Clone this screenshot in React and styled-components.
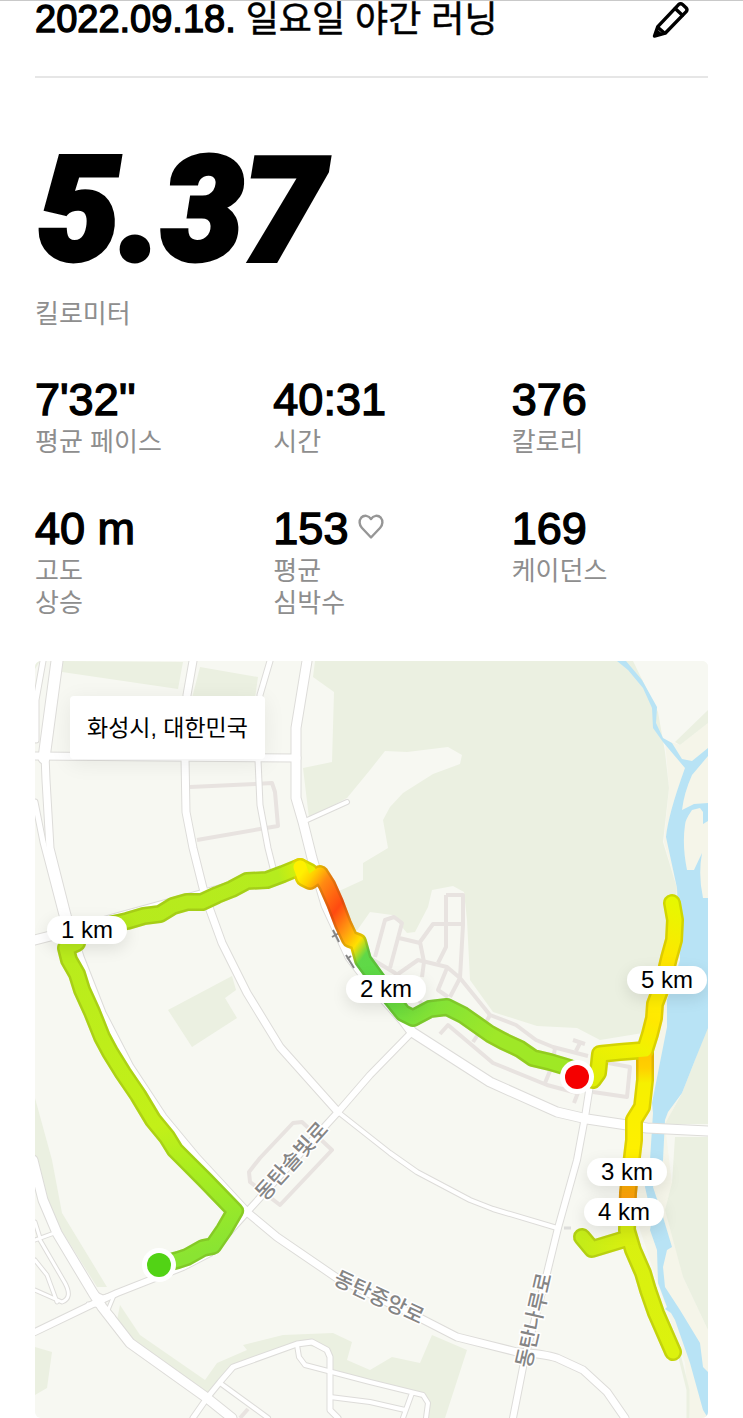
import React from "react";
import styled, { createGlobalStyle } from "styled-components";

const GlobalStyle = createGlobalStyle`
  * {
    box-sizing: border-box;
  }

  body {
    margin: 0;
    background: #fff;
    color: #000;
    font-family: "Liberation Sans", "Noto Sans CJK KR", sans-serif;
  }
`;

const Page = styled.main`
  padding: 0 35px;
  border-top: 1px solid #c9c9c9;
`;

const Header = styled.header`
  display: flex;
  align-items: flex-start;
  justify-content: space-between;
  height: 77px;
  border-bottom: 2px solid #e6e6e6;
`;

const Title = styled.h1`
  margin: 0;
  font-size: 36px;
  font-weight: 400;
  line-height: 36px;
  -webkit-text-stroke: 0.5px #000;
`;

const RunDate = styled.time`
  font-size: 38px;
  -webkit-text-stroke: 1.4px #000;
`;

const EditButton = styled.button`
  display: flex;
  margin: 0;
  margin-right: 16px;
  padding: 0;
  border: none;
  background: none;
  cursor: pointer;
`;

const Distance = styled.section`
  padding-top: 62px;
`;

const DistanceValue = styled.div`
  padding-left: 3px;
  font-family: Roboto, "Liberation Sans", sans-serif;
  font-size: 145px;
  font-style: italic;
  font-weight: 900;
  line-height: 140px;
  -webkit-text-stroke: 5px #000;
`;

const Label = styled.div`
  color: #8e8e8e;
  font-size: 26px;
  line-height: 32px;
`;

const DistanceLabel = styled(Label)`
  margin-top: 18px;
`;

const Stats = styled.section`
  display: grid;
  grid-template-columns: repeat(3, 1fr);
  gap: 45px 42px;
  padding: 44px 0 42px;
`;

const StatValue = styled.div`
  display: flex;
  align-items: center;
  gap: 10px;
  font-size: 45px;
  font-kerning: none;
  line-height: 52px;
  -webkit-text-stroke: 1.4px #000;

  svg {
    margin-bottom: 4px;
  }
`;

const MapBox = styled.section`
  position: relative;
  overflow: hidden;
  border-radius: 6px;
  background: #f7f8f2;
`;

const MapSvg = styled.svg`
  display: block;
  width: 100%;
  height: auto;
`;

const Place = styled.div`
  position: absolute;
  top: 35px;
  left: 35px;
  padding: 16px 17px 15px;
  border-radius: 4px;
  background: #fff;
  box-shadow: 0 4px 22px rgba(0, 0, 0, 0.07);
  font-size: 23px;
  line-height: 32px;
`;

const KmPin = styled.div`
  position: absolute;
  left: ${(p) => ((p.$x - 35) / 673) * 100}%;
  top: ${(p) => ((p.$y - 661) / 757) * 100}%;
  width: 80px;
  border-radius: 14px;
  background: #fff;
  box-shadow: 0 5px 16px rgba(0, 0, 0, 0.1);
  font-size: 24px;
  line-height: 28px;
  text-align: center;
  transform: translate(-50%, -50%);
`;

const RoadName = styled.text`
  fill: #858585;
  stroke: #fff;
  stroke-width: 3px;
  paint-order: stroke;
  font-size: 21px;
  font-weight: 500;
  text-anchor: middle;
`;

const stats = [
  { value: "7'32''", label: ["평균 페이스"] },
  { value: "40:31", label: ["시간"] },
  { value: "376", label: ["칼로리"] },
  { value: "40 m", label: ["고도", "상승"] },
  { value: "153", label: ["평균", "심박수"], heart: true },
  { value: "169", label: ["케이던스"] },
];

const pins = [
  { text: "1 km", x: 87, y: 930 },
  { text: "2 km", x: 386, y: 989 },
  { text: "3 km", x: 627, y: 1172 },
  { text: "4 km", x: 624, y: 1212 },
  { text: "5 km", x: 667, y: 980 },
];

const parks = [
  "M63 661L183 662L178 689L62 672Z",
  "M200 667L258 677L255 698L192 698Z",
  "M35 661H40L35 669Z",
  "M315 661L313 677L334 692L332 762L303 768L309 818L347 798L370 770L385 751L407 752L448 747L462 755L460 764L433 774L403 793L390 807L383 820L388 848L363 863V880L337 892L356 932L370 912L392 915L407 933L415 932L428 907L432 890L453 886L464 892L467 920L470 980L493 1012L537 1026L577 1028L600 1040L643 1033L667 960L677 888L663 842L669 788L665 752L658 712L633 661Z",
  "M168 1010L232 976L236 990L225 998L237 1018L192 1047Z",
  "M35 1098L52 1160L62 1213L107 1287L97 1287L53 1217L35 1160Z",
  "M120 1305L140 1335L205 1380L217 1363L247 1350L243 1345L283 1335L333 1333L352 1342L347 1360L370 1370L392 1357L420 1363L432 1335L467 1350L445 1418H428V1398L330 1372L327 1350L297 1343L233 1367L207 1398L130 1343L117 1320Z",
  "M35 1347L52 1352L47 1388L35 1395Z",
];

const river =
  "M617 661H626L642 680L657 707L656 723L663 738L672 743L682 759L692 761L708 748V756L692 775Q684 793 682 810L694 804L708 803V821L703 824V812L700 808L692 810Q685 820 685 825Q682 845 687 870L694 870L702 853Q698 875 703 898H708V1028L695 1060L682 1093L668 1112L665 1120L663 1160L653 1187L663 1217L672 1247L667 1250L663 1267L665 1287L680 1310L700 1343L703 1367L708 1372V1418L703 1410L690 1363L675 1320L671 1313L665 1309L667 1307L658 1283L657 1250L650 1230L652 1218L645 1187L650 1160L653 1113L652 1103L667 1027L667 1000L680 960L677 888L666 837Q668 815 685 768L663 742L653 728L652 708L643 688L628 670Z";

const lanes = [
  "M190 787L255 784L272 783L275 792L278 826L260 829L197 840",
  "M260 1158L293 1123L302 1122L332 1150L280 1205L250 1182L249 1172Z",
  "M446 895H463V925L460 978L490 1015L516 1025L536 1040L553 1047L588 1056",
  "M446 895V947L438 963",
  "M463 924H433L420 942L424 962L422 977",
  "M375 957L385 920L394 917L402 923L390 968M399 938L420 943",
  "M398 974L418 960L447 967L460 978L450 997M447 968L438 990L448 997",
  "M370 958L395 973L423 1005M395 973L413 1000",
  "M440 1034L448 1025L493 1063L547 1085L577 1093M473 1042L479 1033",
  "M545 1083L552 1066L555 1048M490 1015L485 1024",
  "M579 1090L574 1103M573 1040L585 1044M580 1043L576 1051",
  "M593 1092L627 1097L630 1067L603 1062",
  "M240 1418L248 1409",
];

// width is the casing, the white fill is drawn 2px narrower
const roads = [
  { w: 7, d: "M43 661L36 700V740M35 802L43 842L55 888L62 915" },
  { w: 13, d: "M57 661L48 728L44 758" },
  { w: 9, d: "M45 755L46 780L50 848L67 915L80 957L102 1013L130 1067L163 1117L197 1158L247 1212L277 1237L337 1278L420 1318L457 1337L517 1352Q545 1354 557 1358L583 1370L607 1392L625 1418" },
  { w: 9, d: "M35 756L297 758" },
  { w: 9, d: "M193 661L187 695L185 758L186 812L193 848L203 888L210 910L222 943L247 993L280 1047L338 1112" },
  { w: 6, d: "M338 1112L390 1153L417 1172L470 1200L493 1209L557 1228" },
  { w: 7, d: "M270 661L260 695L258 760L260 805L268 848L273 868" },
  { w: 11, d: "M307 661L296 728V798L303 822L312 858L326 905L350 957L370 983L403 1020L412 1032L437 1048L490 1082L557 1112L587 1119L647 1128L708 1131" },
  { w: 6, d: "M305 821L347 802" },
  { w: 8, d: "M412 1032L370 1075L338 1112L247 1212L210 1253L183 1267L117 1293L93 1304L35 1332" },
  { w: 11, d: "M35 940L70 931L120 917L197 896L300 868" },
  { w: 11, d: "M33 1160L43 1200L57 1233L93 1293L102 1307L130 1343L207 1398L232 1418" },
  { w: 5, d: "M57 1232L35 1240M40 1240L65 1283Q73 1298 62 1302L35 1290M35 1222L40 1238M35 1260L47 1275L57 1302" },
  { w: 5, d: "M92 1292L103 1297L118 1293M88 1304L102 1306L113 1316M115 1293L108 1310" },
  { w: 7, d: "M193 1418L207 1398L220 1382L233 1367L297 1344L312 1342L327 1350L330 1357V1410L338 1418" },
  { w: 6, d: "M297 1345L299 1357L305 1365L370 1382L423 1395L428 1403L426 1418M330 1397L370 1402L405 1410M412 1393L403 1418M220 1383L268 1418" },
  { w: 8, d: "M590 1085L585 1117L577 1160L558 1228L547 1273L525 1357L513 1418" },
];

const routes = [
  {
    d: "M159 1265L178 1260L187 1257L203 1248L213 1246L224 1230L235 1211L205 1180L190 1165L175 1150L167 1137L153 1120L138 1095L123 1073L110 1052L102 1037L92 1012L82 990L77 974L69 960L66 948L77 943",
    id: "a",
  },
  {
    d: "M100 927L127 921L144 916L160 914L173 906L187 902L202 902L217 895L232 889L247 881L267 880L283 874L300 867L310 872",
    id: "b",
  },
  { d: "M300 867L304 878L310 881L320 874L327 885L335 903L343 924L350 939L358 942L363 960L387 993L403 1013L413 1018L430 1009L447 1007L463 1015L490 1034L503 1041L520 1049L533 1058L550 1062L570 1068", id: "c" },
  { d: "M645 1050L645 1080L642 1107L634 1120L634 1140L631 1165L628 1193L627 1230L633 1250L643 1273L648 1290L656 1313L673 1352", id: "e" },
  { d: "M593 1080L598 1073L600 1054L620 1052L645 1050L650 1034L654 1018L655 1004L663 983L669 958L674 940L675 920L672 903", id: "d" },
  { d: "M582 1237L592 1249L625 1239", id: "f" },
];

const gradients = [
  { id: "a", from: [159, 1265], to: [70, 960], stops: [[0, "#8ae432"], [0.25, "#a9ed20"], [0.42, "#c3f018"], [1, "#b9ec1c"]] },
  { id: "b", from: [100, 927], to: [310, 868], stops: [[0, "#b7ea1c"], [0.85, "#b5ec1e"], [1, "#e8f000"]] },
  { id: "c", from: [304, 870], to: [570, 1068], stops: [[0, "#fff000"], [0.03, "#ffd000"], [0.07, "#ff8a12"], [0.15, "#ff4a10"], [0.21, "#ff9a10"], [0.26, "#ffe000"], [0.3, "#60d848"], [0.4, "#5cdc44"], [0.56, "#82e236"], [0.76, "#9fe828"], [1, "#9fe824"]] },
  { id: "d", from: [595, 1080], to: [680, 903], stops: [[0, "#dfee08"], [0.25, "#f2f200"], [0.4, "#ffe800"], [0.55, "#fff000"], [0.7, "#ffe600"], [1, "#e6f800"]] },
  { id: "e", from: [645, 1050], to: [645, 1352], stops: [[0, "#ffc400"], [0.06, "#ffd000"], [0.11, "#f6f000"], [0.35, "#fff000"], [0.43, "#ffb400"], [0.5, "#ff9f10"], [0.57, "#d8f010"], [1, "#dcf20e"]] },
  { id: "f", from: [582, 1237], to: [625, 1239], stops: [[0, "#c4ec18"], [1, "#d8f010"]] },
];

const PencilIcon = () => (
  <svg width="40" height="40" viewBox="12 1 40 40" fill="none" stroke="#000" strokeWidth="3.4" strokeLinejoin="round" strokeLinecap="round" aria-hidden="true">
    <path d="M14.5 36L17.8 26.6L38.6 4.6Q40.6 2.8 42.6 4.6L46 7.7Q47.8 9.6 46.2 11.6L25.2 33.2Z" />
    <path d="M35.2 8.5L42.4 15.2M18 27.5L24.4 33" />
    <path d="M15 35.5L17 30.5L20.5 33.6Z" fill="#000" strokeWidth="2" />
  </svg>
);

const HeartIcon = () => (
  <svg width="26" height="26" viewBox="0 0 26 26" fill="none" stroke="#969696" strokeWidth="2.4" strokeLinejoin="round" aria-hidden="true">
    <path d="M13 23.5L3.8 13.7C1.2 10.9 0.8 6.4 3.2 3.7C6 0.8 10.6 1.3 13 5C15.4 1.3 20 0.8 22.8 3.7C25.2 6.4 24.8 10.9 22.2 13.7Z" />
  </svg>
);

const RouteMap = () => (
  <MapSvg viewBox="35 661 673 757" role="img" aria-label="러닝 경로">
    <defs>
      {gradients.map((g) => (
        <linearGradient key={g.id} id={`pace-${g.id}`} gradientUnits="userSpaceOnUse" x1={g.from[0]} y1={g.from[1]} x2={g.to[0]} y2={g.to[1]}>
          {g.stops.map(([offset, color]) => (
            <stop key={offset} offset={offset} stopColor={color} />
          ))}
        </linearGradient>
      ))}
    </defs>

    {/* river banks */}
    <path fill="#f5f5e9" d="M665 740L680 745L708 723V1040L665 1125L683 1277L708 1330V1418H690L685 1363L650 1260L630 1200L640 1050L677 888L664 842L669 788Z" />
    <path fill="#f7f8f2" d="M650 661H708V710L672 743L660 712Z" />
    <path fill="#ebf0e1" d="M708 710V723L680 745L675 742Z" />
    {parks.map((d) => (
      <path key={d} d={d} fill="#ebf0e1" />
    ))}
    <path fill="#ebf0e1" d="M708 1025L695 1060L682 1093L665 1124H708ZM675 1137H708V1330L683 1277L665 1210L672 1183Z" />
    <path fill="none" stroke="#ebf0e1" strokeWidth="3" d="M678 1350L688 1390V1418" />
    <path d={river} fill="#b8e3f5" />

    <g fill="none" stroke="#e8e3e0" strokeWidth="4" strokeLinejoin="round">
      {lanes.map((d) => (
        <path key={d} d={d} />
      ))}
    </g>
    <g fill="none" stroke="#dddcd9" strokeLinejoin="round" strokeLinecap="round">
      {roads.map((r) => (
        <path key={r.d} d={r.d} strokeWidth={r.w} />
      ))}
    </g>
    <g fill="none" stroke="#fff" strokeLinejoin="round" strokeLinecap="round">
      {roads.map((r) => (
        <path key={r.d} d={r.d} strokeWidth={r.w - 2} />
      ))}
    </g>
    <path d="M564 1228H571" stroke="#dddddb" strokeWidth="3" />
    <path d="M333 930L339 942M332 937L341 932M346 955L354 968M347 959L351 956" stroke="#858585" strokeWidth="2" />

    <RoadName transform="translate(297 1166) rotate(-48)">동탄솔빛로</RoadName>
    <RoadName transform="translate(376 1304) rotate(25)">동탄중앙로</RoadName>
    <RoadName transform="translate(541 1322) rotate(-77)">동탄나루로</RoadName>

    {routes.map((r) => (
      <g key={r.id} fill="none" stroke={`url(#pace-${r.id})`} strokeLinejoin="round" strokeLinecap="round">
        <path d={r.d} strokeWidth="18" />
        <path d={r.d} strokeWidth="18" stroke="#5a5000" strokeOpacity="0.18" />
      </g>
    ))}
    {routes.map((r) => (
      <path key={r.id} d={r.d} fill="none" stroke={`url(#pace-${r.id})`} strokeWidth="13" strokeLinejoin="round" strokeLinecap="round" />
    ))}

    <circle cx="159" cy="1265" r="17" fill="#fff" />
    <circle cx="159" cy="1265" r="12" fill="#52d315" />
    <circle cx="577" cy="1077" r="17" fill="#fff" />
    <circle cx="577" cy="1077" r="12" fill="#f50000" />
  </MapSvg>
);

const App = () => {
  return (
    <>
      <GlobalStyle />
      <Page>
        <Header>
          <Title>
            <RunDate dateTime="2022-09-18">2022.09.18.</RunDate> 일요일 야간 러닝
          </Title>
          <EditButton type="button" aria-label="수정">
            <PencilIcon />
          </EditButton>
        </Header>

        <Distance>
          <DistanceValue>5.37</DistanceValue>
          <DistanceLabel>킬로미터</DistanceLabel>
        </Distance>

        <Stats>
          {stats.map((s) => (
            <div key={s.value}>
              <StatValue>
                {s.value}
                {s.heart && <HeartIcon />}
              </StatValue>
              {s.label.map((line) => (
                <Label key={line}>{line}</Label>
              ))}
            </div>
          ))}
        </Stats>

        <MapBox>
          <RouteMap />
          <Place>화성시, 대한민국</Place>
          {pins.map((p) => (
            <KmPin key={p.text} $x={p.x} $y={p.y}>
              {p.text}
            </KmPin>
          ))}
        </MapBox>
      </Page>
    </>
  );
};

export default App;
